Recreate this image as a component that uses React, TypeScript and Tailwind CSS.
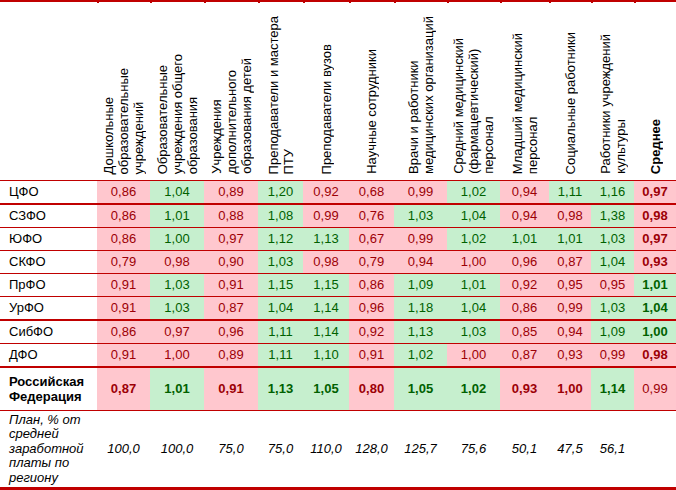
import React from "react";

// column widths follow the source sheet
const GRID =
  "grid grid-cols-[97px_53px_54px_54px_45px_46px_45px_53px_53px_49px_42px_43px_42px]";

const headers: { lines: string[]; bold?: boolean }[] = [
  { lines: ["Дошкольные", "образовательные", "учреждений"] },
  { lines: ["Образовательные", "учреждения общего", "образования"] },
  { lines: ["Учреждения", "дополнительного", "образования детей"] },
  { lines: ["Преподаватели и мастера", "ПТУ"] },
  { lines: ["Преподаватели вузов"] },
  { lines: ["Научные сотрудники"] },
  { lines: ["Врачи и работники", "медицинских организаций"] },
  { lines: ["Средний медицинский", "(фармацевтический)", "персонал"] },
  { lines: ["Младший медицинский", "персонал"] },
  { lines: ["Социальные работники"] },
  { lines: ["Работники учреждений", "культуры"] },
  { lines: ["Среднее"], bold: true },
];

type Row = { name: string; cells: string; thick?: boolean };

// value + tone (g = above average, p = below)
const rows: Row[] = [
  { name: "ЦФО", cells: "0,86p 1,04g 0,89p 1,20g 0,92p 0,68p 0,99p 1,02g 0,94p 1,11g 1,16g 0,97p", thick: true },
  { name: "СЗФО", cells: "0,86p 1,01g 0,88p 1,08g 0,99p 0,76p 1,03g 1,04g 0,94p 0,98p 1,38g 0,98p" },
  { name: "ЮФО", cells: "0,86p 1,00g 0,97p 1,12g 1,13g 0,67p 0,99p 1,02g 1,01g 1,01g 1,03g 0,97p" },
  { name: "СКФО", cells: "0,79p 0,98p 0,90p 1,03g 0,98p 0,79p 0,94p 1,00p 0,96p 0,87p 1,04g 0,93p" },
  { name: "ПрФО", cells: "0,91p 1,03g 0,91p 1,15g 1,15g 0,86p 1,09g 1,01g 0,92p 0,95p 0,95p 1,01g" },
  { name: "УрФО", cells: "0,91p 1,03g 0,87p 1,04g 1,14g 0,96p 1,18g 1,04g 0,86p 0,99p 1,03g 1,04g", thick: true },
  { name: "СибФО", cells: "0,86p 0,97p 0,96p 1,11g 1,14g 0,92p 1,13g 1,03g 0,85p 0,94p 1,09g 1,00g" },
  { name: "ДФО", cells: "0,91p 1,00p 0,89p 1,11g 1,10g 0,91p 1,02g 1,00p 0,87p 0,93p 0,99p 0,98p", thick: true },
];

const russia = "0,87p 1,01g 0,91p 1,13g 1,05g 0,80p 1,05g 1,02g 0,93p 1,00p 1,14g 0,99p";
const plan = ["100,0", "100,0", "75,0", "75,0", "110,0", "128,0", "125,7", "75,6", "50,1", "47,5", "56,1", ""];

function Cell({ v, bold }: { v: string; bold?: boolean }) {
  const tone = v.slice(-1);
  const text = v.slice(0, -1);
  return (
    <div
      className={
        "flex items-center justify-center " +
        (tone === "g" ? "bg-[#c6efce] text-[#006100]" : "bg-[#ffc7ce] text-[#9c0006]") +
        (bold ? " font-bold" : "")
      }
    >
      {text}
    </div>
  );
}

export default function App() {
  return (
    <div className="w-[676px] h-[490px] bg-white text-black text-[13px] overflow-hidden font-['Liberation_Sans',Arial,sans-serif]">
      {/* top rule with small column ticks */}
      <div className="h-[2px] bg-[#c00000]" />
      <div className={GRID + " h-[1px]"}>
        {Array.from({ length: 13 }).map((_, i) => (
          <div key={i} className={i === 0 ? "" : "border-l-2 border-[#c00000]"} />
        ))}
      </div>

      {/* header */}
      <div className={GRID + " h-[178px] border-b border-[#c00000]"}>
        <div />
        {headers.map((h, i) => (
          <div key={i} className="flex items-end justify-center pb-[6px]">
            <div
              className={
                "[writing-mode:vertical-rl] rotate-180 whitespace-nowrap leading-[15px]" +
                (h.bold ? " font-bold" : "")
              }
            >
              {h.lines.map((l, j) => (
                <React.Fragment key={j}>
                  {l}
                  {j < h.lines.length - 1 && <br />}
                </React.Fragment>
              ))}
            </div>
          </div>
        ))}
      </div>

      {rows.map((r) => (
        <div
          key={r.name}
          className={
            GRID +
            " h-[23px] border-[#c00000] " +
            (r.thick ? "h-[24px] border-b-2" : "border-b")
          }
        >
          <div className="flex items-center pl-[9px]">{r.name}</div>
          {r.cells.split(" ").map((v, i) => (
            <Cell key={i} v={v} bold={i === 11} />
          ))}
        </div>
      ))}

      {/* Russia total */}
      <div className={GRID + " h-[43px] border-b border-[#c00000]"}>
        <div className="flex items-center pl-[9px] font-bold leading-[15px]">
          Российская
          <br />
          Федерация
        </div>
        {russia.split(" ").map((v, i) => (
          <Cell key={i} v={v} bold={i !== 11} />
        ))}
      </div>

      {/* plan */}
      <div className={GRID + " h-[79px] border-b-[3px] border-[#c00000] italic"}>
        <div className="flex items-center pl-[9px] leading-[14.5px]">
          <div>
            План, % от
            <br />
            средней
            <br />
            заработной
            <br />
            платы по
            <br />
            региону
          </div>
        </div>
        {plan.map((p, i) => (
          <div key={i} className="flex items-center justify-center">
            {p}
          </div>
        ))}
      </div>
    </div>
  );
}
